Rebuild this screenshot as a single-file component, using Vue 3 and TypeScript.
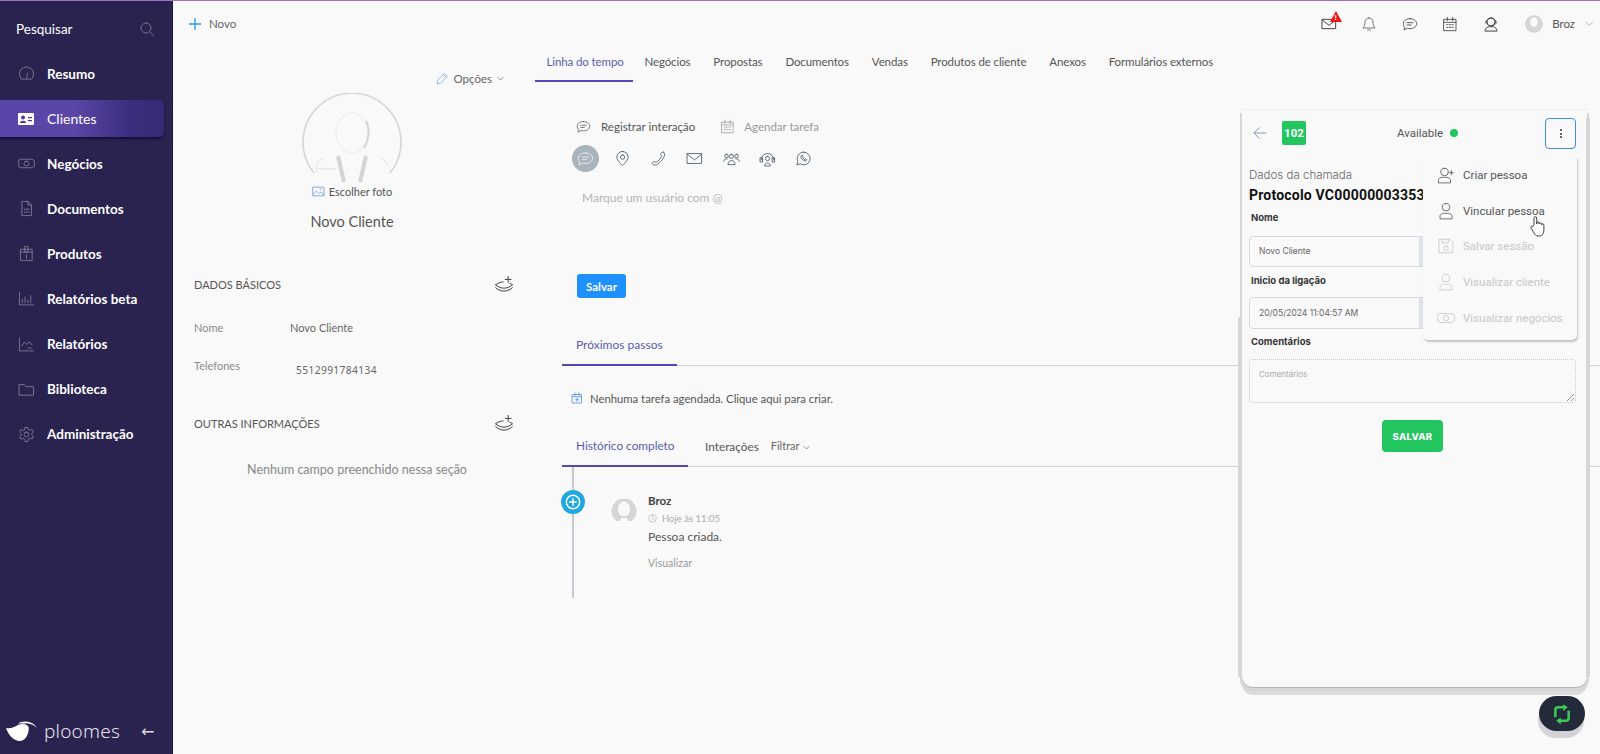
<script setup lang="ts">
import { h } from 'vue'

const paths: Record<string, string[]> = {
  search: ['M10.5 3a7.5 7.5 0 1 0 0 15a7.5 7.5 0 0 0 0-15z', 'M16 16l6 6'],
  gauge: ['M4.500 19.500a10 10 0 1 1 15 0z', 'M12 18.500l1.500-7'],
  money: ['M4 6h16l3 2v8l-3 2H4l-3-2V8z', 'M12 8.5a3.5 3.5 0 1 0 0 7a3.5 3.5 0 0 0 0-7z'],
  doc: ['M6 2h8l5 5v15H6z', 'M14 2v5h5', 'M9 13h7M9 17h7'],
  box: ['M4 6h16v16H4z', 'M4 10h16', 'M10 2h4v8h-4z', 'M12 14v5'],
  bars: ['M2 3v18h20', 'M6 18v-5M10 18v-8M14 18v-4M18 18V8'],
  line: ['M2 3v18h20', 'M5 14l4-5l4 3l3-4l4 5', 'M14 17h5'],
  folder: ['M2 5h7l2 3h11v12H2z'],
  gear: ['M12 8.5a3.5 3.5 0 1 0 0 7a3.5 3.5 0 0 0 0-7z', 'M10 2h4l.6 3l2.5 1.2l2.7-1.4l2 3.4l-2.3 2l.1 2.8l2.2 2l-2 3.4l-2.7-1.2l-2.5 1.4L14 22h-4l-.6-3.2l-2.5-1.4l-2.7 1.2l-2-3.4l2.2-2l.1-2.8l-2.3-2l2-3.4l2.7 1.4L9.400 5z'],
  mail: ['M2 5h20v14H2z', 'M2 6l10 8l10-8'],
  bell: ['M12 3a6 6 0 0 0-6 6c0 6-2 7-3 9h18c-1-2-3-3-3-9a6 6 0 0 0-6-6z', 'M10 21h4'],
  chat: ['M12 4c5.500 0 10 3.300 10 7.500S17.500 19 12 19c-1.500 0-3-.2-4-.7L3 21l1-4c-1.500-1.500-2-3.500-2-5.500C2 7.300 6.500 4 12 4z', 'M7.500 10h9M7.500 13.500h6'],
  cal: ['M3 5h18v17H3z', 'M3 9.500h18M8 2v5M16 2v5', 'M7 13h2M11 13h2M15 13h2M7 17h2M11 17h2M15 17h2'],
  agent: ['M12 3a6 6 0 1 0 0 12a6 6 0 0 0 0-12z', 'M5 9c0-8 14-8 14 0', 'M3 22c1-5 4-6 9-6s8 1 9 6z', 'M18 11c0 3-2 3-5 3', 'M4.500 8v3M19.500 8v3'],
  chev: ['M5 9l7 7l7-7'],
  pencil: ['M16 3l5 5L8 21l-6 1l1-6z', 'M14 5l5 5'],
  picture: ['M2 4h20v16H2z', 'M2 17l6-6l5 5l3-3l6 5', 'M15 8h2'],
  stack: ['M2 13c2-2 6-3.500 9-3.500M2 13c2 2 6 4 10 4s8-2 10-4M22 13c-.8-.9-1.800-1.500-3-2', 'M2 16.500c2 2 6 4 10 4s8-2 10-4', 'M17 3v7M13.500 6.500h7'],
  pin: ['M12 2a8 8 0 0 0-8 8c0 5 8 12 8 12s8-7 8-12a8 8 0 0 0-8-8z', 'M12 7a3 3 0 1 0 0 6a3 3 0 0 0 0-6z'],
  phone: ['M19 3c3 1 2 6-2 11s-8 8-12 7c-3-1-2-4 0-4.500c2-.5 2 1.500 4 .5c3-1.500 6-5 7-8c.5-2-1.500-2-1-3.500C15.500 4 17.500 2.500 19 3z'],
  people: ['M12 6a3 3 0 1 0 0 6a3 3 0 0 0 0-6z', 'M5 6a2.500 2.500 0 1 0 0 5a2.500 2.500 0 0 0 0-5z', 'M19 6a2.500 2.500 0 1 0 0 5A2.500 2.500 0 0 0 19 6z', 'M7 20c0-7 10-7 10 0z', 'M1 16c0-3 3-4 5-3.500M23 16c0-3-3-4-5-3.500'],
  headset: ['M3 14a9 9 0 0 1 18 0', 'M2 11h3v6H2zM19 11h3v6h-3z', 'M12 9a3 3 0 1 0 0 6a3 3 0 0 0 0-6z', 'M8 22c0-5 8-5 8 0z'],
  whats: ['M12 3a9 9 0 0 0-8 13l-1.500 5l5-1.500A9 9 0 1 0 12 3z', 'M9 8c-1 1-1 3 1 5s4 3 6 2l.5-1.500l-2-1l-1 .8c-1-.4-2-1.300-2.500-2.500l.8-1l-1-2z'],
  calplus: ['M3 5h18v17H3z', 'M3 9.500h18M8 2v5M16 2v5', 'M12 12.500v6M9 15.500h6'],
  clock: ['M12 2a10 10 0 1 0 0 20a10 10 0 0 0 0-20z', 'M12 6v6l4 3'],
  plusc: ['M12 2a10 10 0 1 0 0 20a10 10 0 0 0 0-20z', 'M12 7v10M7 12h10'],
  back: ['M21 12H3', 'M11 4l-8 8l8 8'],
  addp: ['M10 3a5 5 0 1 0 0 10a5 5 0 0 0 0-10z', 'M2 22v-3c0-3 3-4 8-4s8 1 8 4v3z', 'M19 6v6M16 9h6'],
  person: ['M12 2a5 5 0 1 0 0 10a5 5 0 0 0 0-10z', 'M4 22v-3c0-3 3-4 8-4s8 1 8 4v3z'],
  save: ['M3 3h14l4 4v14H3z', 'M7 3v5h8V3', 'M12 12a3 3 0 1 0 0 6a3 3 0 0 0 0-6z'],
}

const Ico = (props: { n: string; s?: number; w?: number }) =>
  h('svg', { class: 'ico', width: props.s ?? 16, height: props.s ?? 16, viewBox: '0 0 24 24', fill: 'none', stroke: 'currentColor', 'stroke-width': props.w ?? 1.5, 'stroke-linejoin': 'round', 'stroke-linecap': 'round' },
    (paths[props.n] ?? []).map((d) => h('path', { d })))

const nav = [
  { label: 'Resumo', icon: 'gauge' },
  { label: 'Clientes', icon: 'card', active: true },
  { label: 'Negócios', icon: 'money' },
  { label: 'Documentos', icon: 'doc' },
  { label: 'Produtos', icon: 'box' },
  { label: 'Relatórios beta', icon: 'bars' },
  { label: 'Relatórios', icon: 'line' },
  { label: 'Biblioteca', icon: 'folder' },
  { label: 'Administração', icon: 'gear' },
]
const tabs = ['Linha do tempo', 'Negócios', 'Propostas', 'Documentos', 'Vendas', 'Produtos de cliente', 'Anexos', 'Formulários externos']
const kinds = ['chat', 'pin', 'phone', 'mail', 'people', 'headset', 'whats']
const menu = [
  { label: 'Criar pessoa', icon: 'addp' },
  { label: 'Vincular pessoa', icon: 'person' },
  { label: 'Salvar sessão', icon: 'save', off: true },
  { label: 'Visualizar cliente', icon: 'person', off: true },
  { label: 'Visualizar negócios', icon: 'money', off: true },
]
</script>

<template>
  <div class="app">
    <aside class="side">
      <div class="search"><span>Pesquisar</span><Ico n="search" :s="16" :w="1.4" class="search-i" /></div>
      <nav class="nav">
        <a v-for="item in nav" :key="item.label" class="nav-item" :class="{ active: item.active }">
          <span class="nav-i">
            <svg v-if="item.icon === 'card'" width="16" height="12" viewBox="0 0 16 12"><rect width="16" height="12" rx="1" fill="#fff" /><circle cx="5" cy="4.500" r="2" fill="#4c3c98" /><path d="M2 10c0-3 6-3 6 0zM10 4h4v1.300h-4zM10 7h4v1.300h-4z" fill="#4c3c98" /></svg>
            <Ico v-else :n="item.icon" :s="17" :w="1.100" />
          </span>
          <span>{{ item.label }}</span>
        </a>
      </nav>
      <div class="brand">
        <svg width="32" height="21" viewBox="0 0 32 21"><path d="M0 7c5 1 8-1 12-3c4-2 8-1 10 1c1 1 1 4 0 7c-1 4-4 8-8 8C7 20 2 13 0 7z" fill="#fff" /><path d="M12 2.500C18-1 27 0 31 7c-3-3-6-4-9-4.500z" fill="#fff" /></svg>
        <span class="brand-name">ploomes</span>
        <span class="brand-arrow">←</span>
      </div>
    </aside>

    <main class="main">
      <header class="top">
        <div class="new"><svg width="12" height="12" viewBox="0 0 12 12"><path d="M6 0v12M0 6h12" stroke="#2b9cf0" stroke-width="1.300" /></svg><span>Novo</span></div>
        <div class="top-r">
          <span class="t-ic mail-ic"><Ico n="mail" :s="16" :w="1.500" /><span class="alert"><svg width="12" height="11" viewBox="0 0 12 11"><path d="M6 0l6 11H0z" fill="#f01414" /></svg><b>!</b></span></span>
          <span class="t-ic"><Ico n="bell" :s="16" :w="1.100" /></span>
          <span class="t-ic"><Ico n="chat" :s="16" :w="1.300" /></span>
          <span class="t-ic"><Ico n="cal" :s="16" :w="1.300" /></span>
          <span class="t-ic"><Ico n="agent" :s="16" :w="1.500" /></span>
          <svg class="t-av" width="18" height="18" viewBox="0 0 18 18"><circle cx="9" cy="9" r="9" fill="#d6d6d6" /><ellipse cx="9" cy="7" rx="3.800" ry="4.800" fill="#f9f9f9" /></svg>
          <span class="t-name">Broz</span>
          <Ico n="chev" :s="11" :w="1.300" class="t-chev" />
        </div>
      </header>

      <div class="content">
        <section class="left">
          <div class="opts"><Ico n="pencil" :s="13" :w="1.300" class="blue" /><span>Opções</span><Ico n="chev" :s="9" :w="1.800" /></div>
          <div class="photo">
            <svg width="100" height="90" viewBox="0 0 100 90" fill="none" stroke="#d5d5d5">
              <path d="M12 80A49 49 0 1 1 88 80" stroke-width="1.600" />
              <ellipse cx="50" cy="40" rx="16" ry="20" stroke-width="1" stroke-dasharray="1 1.500" />
              <path d="M64 28c4 8 3 18-2 27" stroke-width="2" />
              <path d="M36 63l6 26M64 63l-6 26" stroke-width="4" />
              <path d="M15 80c-2-8 0-12 6-14M80 66c3 1 5 4 6 7M16 76h18" stroke-width="0.700" />
            </svg>
            <div class="pick"><Ico n="picture" :s="13" :w="1.500" class="blue" /><span>Escolher foto</span></div>
            <div class="cname">Novo Cliente</div>
          </div>
          <div class="sec first"><span>DADOS BÁSICOS</span><Ico n="stack" :s="20" :w="1.100" class="dark" /></div>
          <div class="field f1"><span class="k">Nome</span><span class="v">Novo Cliente</span></div>
          <div class="field f2"><span class="k">Telefones</span><span class="v phone">5512991784134</span></div>
          <div class="sec second"><span>OUTRAS INFORMAÇÕES</span><Ico n="stack" :s="20" :w="1.100" class="dark" /></div>
          <p class="empty">Nenhum campo preenchido nessa seção</p>
        </section>

        <section class="center">
          <div class="tabs">
            <a v-for="(t, i) in tabs" :key="t" class="tab" :class="{ on: i === 0 }">{{ t }}</a>
          </div>
          <div class="composer">
            <div class="modes">
              <span class="mode"><Ico n="chat" :s="15" :w="1.200" /><span>Registrar interação</span></span>
              <span class="mode dim"><Ico n="cal" :s="15" :w="1.200" /><span>Agendar tarefa</span></span>
            </div>
            <div class="kinds">
              <span v-for="(k, i) in kinds" :key="k" class="kind" :class="{ sel: i === 0 }"><Ico :n="k" :s="17" :w="1.200" /></span>
            </div>
            <div class="ph">Marque um usuário com @</div>
            <button class="save" type="button">Salvar</button>
          </div>
          <div class="subtabs s1"><a class="sub on p">Próximos passos</a></div>
          <div class="none"><Ico n="calplus" :s="12" :w="1.600" class="blue2" /><span>Nenhuma tarefa agendada. Clique aqui para criar.</span></div>
          <div class="subtabs s2">
            <a class="sub on h">Histórico completo</a>
            <a class="sub i">Interações</a>
            <span class="filter">Filtrar<Ico n="chev" :s="9" :w="1.800" /></span>
          </div>
          <div class="timeline">
            <span class="plus"><Ico n="plusc" :s="16" :w="2.200" /></span>
            <div class="entry">
              <svg class="e-av" width="26" height="26" viewBox="0 0 26 26"><circle cx="13" cy="13" r="12.500" fill="#d6d6d6" /><ellipse cx="13" cy="11" rx="6" ry="7.500" fill="#f9f9f9" /><path d="M0 23h9l1-3h6l1 3h9v3H0z" fill="#f9f9f9" /></svg>
              <div class="e-body">
                <div class="e-name">Broz</div>
                <div class="e-time"><Ico n="clock" :s="9" :w="1.600" /><span>Hoje às 11:05</span></div>
                <div class="e-text">Pessoa criada.</div>
                <div class="e-link">Visualizar</div>
              </div>
            </div>
          </div>
        </section>
      </div>
    </main>

    <div class="panel">
      <div class="p-head">
        <Ico n="back" :s="16" :w="1.500" class="p-back" />
        <span class="ext">102</span>
        <span class="status"><span>Available</span><i class="dot"></i></span>
        <button class="kebab" type="button"><i></i><i></i><i></i></button>
      </div>
      <div class="p-sub">Dados da chamada</div>
      <div class="p-proto">Protocolo VC0000000335312</div>
      <label class="p-l nome">Nome</label>
      <div class="p-input"><span>Novo Cliente</span><i class="addon"></i></div>
      <label class="p-l">Inicio da ligação</label>
      <div class="p-input tall"><span>20/05/2024 11:04:57 AM</span><i class="addon"></i></div>
      <label class="p-l com">Comentários</label>
      <div class="p-area">Comentários<svg width="8" height="8" viewBox="0 0 8 8"><path d="M1 8l7-7M5 8l3-3" stroke="#777" stroke-width="0.800" /></svg></div>
      <button class="p-save" type="button">SALVAR</button>

      <ul class="menu">
        <li v-for="m in menu" :key="m.label" :class="{ off: m.off }">
          <Ico :n="m.icon" :s="18" :w="1.100" /><span>{{ m.label }}</span>
        </li>
      </ul>
      <svg class="hand" width="18" height="22" viewBox="0 0 18 22" fill="#fff" stroke="#333" stroke-width="0.900" stroke-linejoin="round"><path d="M5 10V3a1.300 1.300 0 0 1 2.700 0v6V8a1.200 1.200 0 0 1 2.400 0v1a1.200 1.200 0 0 1 2.400 0v1a1.200 1.200 0 0 1 2.400 0v5c0 3-1.500 6-4 6H9c-2 0-3-1-4-3l-3-5c-.6-1.500 1-2.500 2-1.500z" /></svg>
    </div>

    <button class="fab" type="button">
      <svg width="20" height="20" viewBox="0 0 18 18" fill="none" stroke="#3fc85a" stroke-width="2.300"><path d="M3 12V5.500Q3 3 5.500 3H12M15 6v6.500Q15 15 12.500 15H6" /><path d="M10 1l3 2l-3 2.500M8 13l-3 2l3 2.500" stroke-width="1.500" /></svg>
    </button>
  </div>
</template>

<style>
html, body { margin: 0; height: 100%; overflow: hidden; background: #f9f9f9; }
#app { height: 100%; }
</style>

<style scoped>
.app {
  display: flex;
  height: 754px;
  border-top: 1px solid #9a6fc0;
  box-sizing: border-box;
  font-family: Lato, "Noto Sans", sans-serif;
  color: #555;
  background: #f9f9f9;
  font-size: 12px;
  position: relative;
  overflow: hidden;
}
a { display: block; }
.ico { flex: none; display: block; }

.side {
  width: 173px;
  flex: none;
  background: #2a2350;
  border-right: 1px solid #1a1440;
  box-sizing: border-box;
  display: flex;
  flex-direction: column;
  color: #fff;
}
.search {
  display: flex;
  justify-content: space-between;
  align-items: center;
  padding: 19px 17px 0 16px;
  font-size: 13.500px;
  line-height: 18px;
}
.search-i { color: #77738c; }
.nav { margin-top: 17px; display: flex; flex-direction: column; gap: 8.100px; }
.nav-item {
  display: flex;
  align-items: center;
  height: 37px;
  width: 164px;
  padding-left: 18px;
  box-sizing: border-box;
  font-size: 13.500px;
  font-weight: 700;
  border-radius: 0 5px 5px 0;
}
.nav-i { width: 29px; flex: none; color: #8b87a0; display: flex; }
.nav-item.active {
  background: linear-gradient(90deg, #5a46a9 0%, #5a46a6 45%, #3a2e7e 80%, #352a76 100%);
  box-shadow: 0 2px 2px #161038;
  font-weight: 400;
  font-size: 14px;
}
.brand { margin-top: auto; display: flex; align-items: center; padding: 0 0 11px 6px; }
.brand-name { font-family: "Noto Sans", sans-serif; font-weight: 300; font-size: 19px; margin-left: 6px; color: #e4e2ec; letter-spacing: 0.200px; line-height: 24px; }
.brand-arrow { margin-left: 21px; font-size: 16px; color: #ddd; font-family: "DejaVu Sans", sans-serif; }

.main { flex: 1; min-width: 0; display: flex; flex-direction: column; }
.top { height: 45px; display: flex; justify-content: space-between; align-items: center; padding: 0 5px 0 16px; flex: none; }
.new { display: flex; align-items: center; gap: 8px; font-size: 11.500px; color: #666; }
.top-r { display: flex; align-items: center; color: #444; }
.t-ic { width: 40.500px; display: flex; justify-content: center; position: relative; }
.alert { position: absolute; left: 21px; top: -5px; width: 12px; height: 11px; }
.alert svg { display: block; }
.alert b { position: absolute; inset: 2px 0 0 0; text-align: center; font: 700 8px/9px "Liberation Sans", sans-serif; color: #fff; }
.t-av { margin-left: 14px; }
.t-name { margin-left: 9px; font-size: 11.500px; color: #555; }
.t-chev { margin-left: 9px; color: #888; }

.content { display: flex; flex: 1; min-height: 0; }
.left { width: 362px; flex: none; display: flex; flex-direction: column; }
.opts { display: flex; align-items: center; gap: 4px; justify-content: flex-end; padding-right: 30px; margin-top: 23px; height: 18px; font-size: 11.500px; color: #666; }
.blue { color: #6b9be8; }
.blue2 { color: #4c8fe0; }
.dark { color: #333; }
.photo { display: flex; flex-direction: column; align-items: center; margin-top: 6px; padding-right: 4px; }
.pick { display: flex; align-items: center; gap: 4px; height: 16px; font-size: 11px; color: #555; }
.cname { margin-top: 13px; font-size: 14.500px; line-height: 20px; color: #555; }
.sec { display: flex; align-items: center; justify-content: space-between; padding: 0 21px 0 21px; font-size: 11px; color: #555; height: 20px; }
.first { margin-top: 42px; }
.second { margin-top: 35px; }
.field { display: flex; padding-left: 21px; font-size: 11px; line-height: 16px; }
.f1 { margin-top: 26px; }
.f2 { margin-top: 22px; }
.k { width: 96px; color: #8a8a8a; }
.v { color: #666; }
.phone { padding: 4px 0 0 6px; letter-spacing: 0.400px; font-family: "Noto Sans", sans-serif; font-size: 10.200px; }
.empty { margin: 28px 0 0; text-align: center; font-size: 12.500px; color: #888; padding-left: 6px; line-height: 18px; }

.center { flex: 1; min-width: 0; display: flex; flex-direction: column; }
.tabs { display: flex; height: 36px; align-items: flex-start; }
.tab { padding: 6px 11.450px 10px; line-height: 20px; font-size: 11.500px; letter-spacing: -0.100px; color: #555; white-space: nowrap; box-sizing: border-box; height: 36px; }
.tab.on { color: #5a5cb0; border-bottom: 2px solid #5a45b8; width: 98px; }
.composer { padding-left: 30px; }
.modes { display: flex; gap: 25px; margin: 34px 0 0 11px; height: 20px; }
.mode { display: flex; align-items: center; gap: 10px; font-size: 11.500px; color: #555; }
.mode.dim { color: #999; gap: 9px; }
.kinds { display: flex; margin-top: 9px; height: 27px; margin-left: 7px; }
.kind { width: 36.300px; height: 27px; display: flex; align-items: center; justify-content: center; color: #4a5a6a; flex: none; }
.kind.sel { width: 27px; margin-right: 5px; background: #a9b3bc; border-radius: 50%; color: #f2f4f5; }
.ph { margin: 16px 0 0 17px; line-height: 20px; font-size: 12px; color: #b5b5b5; }
.save { display: block; margin: 66px 0 0 12px; width: 49px; height: 24px; border: 0; border-radius: 3px; background: #1e90ff; color: #fff; font: 700 11.500px Lato, sans-serif; padding: 0; }

.subtabs { margin-left: 27px; display: flex; align-items: flex-end; border-bottom: 1px solid #cfcfd6; height: 30px; box-sizing: border-box; }
.s1 { margin-top: 38px; }
.s2 { margin-top: 29px; }
.sub { font-size: 12px; line-height: 18px; height: 29px; box-sizing: border-box; padding-top: 0; color: #555; margin-bottom: -1px; }
.sub.on { color: #5a5cb0; border-bottom: 2px solid #5a45b8; height: 30px; padding: 0 0 0 14px; }
.sub.p { width: 115px; }
.sub.h { width: 126px; font-size: 11.800px; }
.sub.i { margin-left: 17px; font-size: 11.800px; }
.filter { display: flex; gap: 2px; margin-left: 12px; height: 29px; align-self: flex-start; line-height: 18px; font-size: 11px; color: #666; align-items: flex-start; }
.filter .ico { margin-top: 6px; }
.none { display: flex; align-items: center; gap: 7px; margin: 22px 0 0 36px; height: 20px; font-size: 11.300px; color: #555; }

.timeline { margin-left: 37px; border-left: 2px solid #c8c8cf; height: 131px; position: relative; width: 400px; box-sizing: border-box; }
.plus { position: absolute; left: -13px; top: 23px; width: 24px; height: 24px; border-radius: 50%; background: #1fa8e0; color: #fff; display: flex; align-items: center; justify-content: center; }
.entry { display: flex; padding: 26px 0 0 37px; gap: 11px; }
.e-av { margin-top: 5px; flex: none; }
.e-name { font-size: 11.500px; font-weight: 700; color: #444; line-height: 15px; }
.e-time { display: flex; align-items: center; gap: 5px; margin-top: 3px; font-size: 9.500px; color: #aaa; line-height: 15px; }
.e-text { margin-top: 3px; font-size: 12px; color: #555; line-height: 16px; }
.e-link { margin-top: 10px; font-size: 10.500px; color: #999; line-height: 16px; }

.panel {
  position: absolute;
  left: 1242px;
  top: 108px;
  width: 345px;
  height: 578px;
  box-sizing: border-box;
  background: #f9f9f9;
  border-radius: 0 0 11px 11px;
  box-shadow: 0 1px 0 #b5b5b5, -2px 4px 0 #d6d6d6, 2px 4px 0 #d6d6d6, 0 8px 0 #dcdcdc;
  padding: 0 11px 0 7px;
  font-family: Inter, Roboto, sans-serif;
  color: #333;
  border-top: 1px dotted #e2e2e2;
}
.panel::before, .panel::after {
  content: '';
  position: absolute;
  width: 4px;
  background: #d6d6d6;
  bottom: 10px;
}
.panel::before { left: -4px; top: 207px; }
.panel::after { right: -3px; top: 8px; }
.p-head { display: flex; align-items: center; height: 30px; margin-top: 8px; position: relative; }
.p-back { color: #8a9bb0; margin-left: 3px; }
.ext { margin-left: 14px; width: 24px; height: 24px; border-radius: 2px; background: #22c55e; color: #fff; font: 700 11.500px/24px Roboto, sans-serif; text-align: center; }
.status { position: absolute; left: 148px; display: flex; align-items: center; gap: 7px; font: 400 11.500px Roboto, sans-serif; color: #555; }
.dot { width: 8px; height: 8px; border-radius: 50%; background: #22c55e; display: block; }
.kebab { position: absolute; right: 0; top: 0; width: 31px; height: 31px; box-sizing: border-box; border: 1px solid #3b8fe0; border-radius: 4px; background: transparent; display: flex; flex-direction: column; align-items: center; justify-content: center; gap: 1.500px; padding: 0; }
.kebab i { width: 2px; height: 2px; background: #333; border-radius: 50%; display: block; }
.p-sub { margin-top: 20px; font: 300 11.500px/14px Inter, sans-serif; color: #666; }
.p-proto { margin-top: 4px; font: 700 14px/18px Roboto, sans-serif; color: #111; white-space: nowrap; overflow: hidden; letter-spacing: 0.200px; }
.p-l { display: block; margin: 6px 0 0 2px; font: 700 9.500px/16px Inter, Roboto, sans-serif; color: #333; }
.p-l.nome { margin-top: 6px; }
.p-input { display: flex; margin-top: 10px; height: 31px; border: 1px solid #d8d8de; border-radius: 4px; box-sizing: border-box; padding-left: 9px; font: 400 8.500px/29px Inter, Roboto, sans-serif; color: #666; }
.addon { display: block; margin-left: auto; width: 156px; background: #dfe4ec; border-radius: 0 4px 4px 0; }
.p-input.tall { margin-top: 8px; height: 32px; line-height: 30px; }
.p-l.com { margin-top: 5px; }
.p-area { margin-top: 9px; height: 44px; border: 1px dotted #c8c8d0; border-radius: 4px; box-sizing: border-box; padding: 8px 9px; font: 400 8px/12px Inter, Roboto, sans-serif; color: #aaa; position: relative; }
.p-area svg { position: absolute; right: 1px; bottom: 1px; }
.p-save { display: block; margin: 17px auto 0; width: 61px; height: 32px; border: 0; border-radius: 4px; background: #22c55e; color: #fff; font: 800 9.500px Inter, sans-serif; letter-spacing: 0.300px; padding: 0; }
.menu { position: absolute; left: 181px; top: 47px; width: 154px; height: 183px; margin: 0; padding: 0; list-style: none; background: #f9f9f9; border-radius: 0 0 5px 5px; box-shadow: 1px 2px 2px #c2c2c2; font: 400 11.500px Roboto, sans-serif; color: #555; box-sizing: border-box; }
.menu li { display: flex; align-items: center; height: 35.800px; padding-left: 14px; gap: 8px; }
.menu li.off { color: #c7c7c7; }
.hand { position: absolute; left: 287px; top: 105px; }
.fab { position: absolute; left: 1539px; top: 695px; width: 46px; height: 35px; border: 0; border-radius: 18px; background: #232b3a; box-shadow: -1px 7px 1px #d4d4d8; display: flex; align-items: center; justify-content: center; padding: 0; }
</style>
